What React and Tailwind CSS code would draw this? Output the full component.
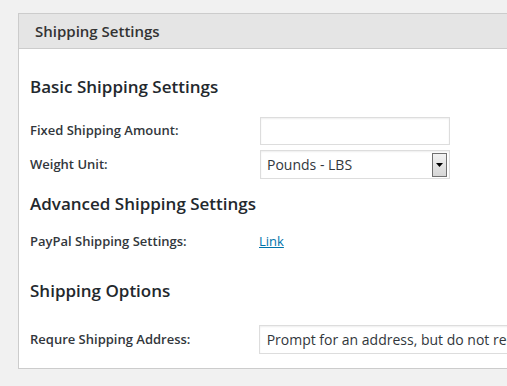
export default function App() {
  const font = { fontFamily: '"Open Sans", "Noto Sans", sans-serif' };
  return (
    <div className="w-[507px] h-[386px] bg-[#f1f1f1] overflow-hidden pt-[13px] pl-[18px]" style={font}>
      <div className="w-[520px] h-[356px] border border-[#cccccc] bg-white flex flex-col">
        <div className="h-[35px] bg-[#e5e5e5] border-b border-[#cccccc] flex items-center pl-[16px]">
          <span className="text-[15px] font-semibold text-[#333]">Shipping Settings</span>
        </div>
        <div className="pl-[11px] flex flex-col text-[#23282d]">
          <h3 className="mt-[26px] h-[24px] flex items-center text-[17px] font-semibold">Basic Shipping Settings</h3>
          <div className="mt-[17px] flex items-center h-[29px]">
            <span className="w-[230px] text-[13px] font-semibold text-[#32373c]">Fixed Shipping Amount:</span>
            <div className="w-[190px] h-[28px] border border-[#dddddd] shadow-[inset_0_1px_2px_rgba(0,0,0,0.07)]"></div>
          </div>
          <div className="mt-[5px] flex items-center h-[29px]">
            <span className="w-[230px] text-[13px] font-semibold text-[#32373c]">Weight Unit:</span>
            <div className="w-[190px] h-[29px] border border-[#dddddd] flex items-center justify-between pl-[6px] pr-[2px] shadow-[inset_0_1px_2px_rgba(0,0,0,0.07)]">
              <span className="text-[14px] text-[#32373c]">Pounds - LBS</span>
              <div className="w-[15px] h-[24px] border border-[#707070] bg-gradient-to-b from-[#f2f2f2] to-[#d6d6d6] flex items-center justify-center">
                <svg width="7" height="4" viewBox="0 0 7 4"><path d="M0 0H7L3.5 4Z" fill="#000" /></svg>
              </div>
            </div>
          </div>
          <h3 className="mt-[13px] h-[24px] flex items-center text-[17px] font-semibold">Advanced Shipping Settings</h3>
          <div className="mt-[16px] flex items-center h-[20px]">
            <span className="w-[229px] text-[13px] font-semibold text-[#32373c]">PayPal Shipping Settings:</span>
            <a href="#" className="text-[13px] text-[#0073aa] underline">Link</a>
          </div>
          <h3 className="mt-[27px] h-[24px] flex items-center text-[17px] font-semibold">Shipping Options</h3>
          <div className="mt-[22px] flex items-center h-[29px]">
            <span className="w-[230px] text-[13px] font-semibold text-[#32373c]">Requre Shipping Address:</span>
            <div className="w-[280px] h-[29px] border border-[#dddddd] flex items-center pl-[7px] whitespace-nowrap overflow-hidden shadow-[inset_0_1px_2px_rgba(0,0,0,0.07)]">
              <span className="text-[14px] text-[#32373c]">Prompt for an address, but do not require one</span>
            </div>
          </div>
        </div>
      </div>
    </div>
  );
}
